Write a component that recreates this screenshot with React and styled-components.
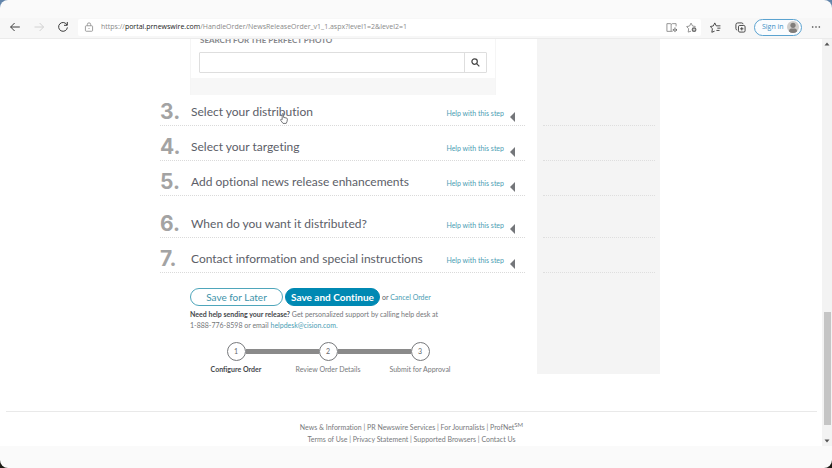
import React from "react";
import styled, { createGlobalStyle, css } from "styled-components";

const GlobalStyle = createGlobalStyle`
  *, *::before, *::after { box-sizing: border-box; }
  body {
    margin: 0;
    background: linear-gradient(#6285ab 0, #6285ab 50%, #1d1c16 50%);
    font-family: Lato, "Open Sans", sans-serif;
    font-variant-ligatures: none;
    color: #5e6065;
  }
  button, input { font-family: inherit; color: inherit; margin: 0; padding: 0; }
  a { text-decoration: none; color: inherit; }
`;

const Window = styled.div`
  display: flex;
  flex-direction: column;
  height: 100vh;
  overflow: hidden;
  border-radius: 8px;
  background: #fafafa;
`;

const TabStrip = styled.div`
  height: 18px;
  flex: none;
`;

const Toolbar = styled.header`
  display: flex;
  align-items: center;
  height: 21px;
  flex: none;
  padding: 0 2px 2px 7px;
  background: #f7f7f7;
  border-bottom: 1px solid #ebebeb;
`;

const ToolButton = styled.button`
  display: flex;
  align-items: center;
  justify-content: center;
  width: ${(p) => p.$width || 24}px;
  height: 16px;
  flex: none;
  border: 0;
  background: none;
  color: ${(p) => p.$color || "#3c3c3c"};
`;

const AddressBar = styled.div`
  display: flex;
  align-items: center;
  flex: 1;
  min-width: 0;
  height: 17px;
  margin-left: 7px;
  padding-left: 3px;
  border-radius: 2px;
  background: #fff;
`;

const Address = styled.div`
  flex: 1;
  min-width: 0;
  overflow: hidden;
  white-space: nowrap;
  padding-left: 4px;
  font: 7px/16px "Open Sans", sans-serif;
  color: #8a8a8a;
  b { font-weight: 400; color: #222; }
`;

const SignIn = styled.button`
  display: flex;
  align-items: center;
  justify-content: space-between;
  width: 48px;
  height: 17px;
  flex: none;
  margin-left: 3px;
  padding: 0 2px 0 7px;
  border: 1px solid #5ba3d0;
  border-radius: 9px;
  background: #fafcfe;
  font: 7px/14px "Open Sans", sans-serif;
  color: #3b8fc4;
`;

const Viewport = styled.div`
  display: flex;
  flex: 1;
  min-height: 0;
  background: #fff;
`;

const Page = styled.div`
  flex: 1;
  min-width: 0;
  padding-right: 2px;
  overflow: hidden;
`;

const Columns = styled.div`
  display: flex;
  gap: 12px;
  width: 500px;
  max-width: 100%;
  margin: 0 auto;
`;

const Main = styled.main`
  flex: 1;
  min-width: 0;
`;

const Sidebar = styled.aside`
  width: 123px;
  padding: 0 5px 0 6px;
  background: #f4f4f4;
`;

const SideSection = styled.div`
  height: ${(p) => p.$height}px;
  border-bottom: 1px dotted #dedede;
`;

const PhotoSearch = styled.form`
  height: 56px;
  margin: 0 29px 0 30px;
  border: solid #f5f5f5;
  border-width: 0 1px;
  overflow: hidden;
`;

const PhotoTitle = styled.label`
  display: block;
  height: 10px;
  margin: -5px 0 0 9px;
  font: 700 8px/12px Lato, sans-serif;
  color: #85868a;
`;

const SearchBox = styled.div`
  display: flex;
  height: 21px;
  margin: 8px 8px 5px 8px;
  border: 1px solid #dedede;
  border-radius: 1px;
`;

const SearchInput = styled.input`
  flex: 1;
  min-width: 0;
  border: 0;
  border-right: 1px solid #dedede;
  padding: 0 6px;
  background: #fff;
  font-size: 9px;
  outline: 0;
`;

const SearchButton = styled.button`
  display: flex;
  align-items: center;
  justify-content: center;
  width: 21px;
  border: 0;
  background: #fff;
  color: #444;
`;

const SearchFoot = styled.div`
  height: 17px;
  background: #f7f7f7;
`;

const Step = styled.section`
  position: relative;
  display: flex;
  align-items: flex-end;
  height: ${(p) => p.$height}px;
  border-bottom: 1px dotted #dadada;
`;

const StepNumber = styled.span`
  width: 31px;
  font: 700 21px/26px Inter, sans-serif;
  color: #a3a3a3;
`;

const StepTitle = styled.h2`
  flex: 1;
  margin: 0 0 5px;
  font: 400 12px/16px Lato, sans-serif;
  font-variant-ligatures: none;
  color: #5c5e68;
  white-space: nowrap;
`;

const HelpLink = styled.a`
  margin-bottom: 7px;
  font-size: 7px;
  line-height: 10px;
  color: #4b9db3;
`;

const Collapse = styled.button`
  display: flex;
  width: 5px;
  height: 10px;
  margin: 0 10px 3px 6px;
  border: 0;
  background: none;
`;

const Cursor = styled.svg`
  position: absolute;
  left: 120px;
  top: 18px;
`;

const Actions = styled.div`
  display: flex;
  align-items: center;
  gap: 2px;
  margin: 15px 0 0 30px;
  font-size: 7px;
  white-space: nowrap;
`;

const Pill = styled.button`
  height: 18px;
  width: ${(p) => (p.$primary ? 95 : 93)}px;
  border: 1px solid #4fa6bb;
  border-radius: 9px;
  background: #fff;
  color: #3d93aa;
  font: 400 10px/14px Lato, sans-serif;
  ${(p) =>
    p.$primary &&
    css`
      border-color: #0089b3;
      background: #0089b3;
      color: #fff;
      font-weight: 700;
      font-variant-ligatures: none;
    `}
`;

const TextLink = styled.a`
  color: #4b9db3;
`;

const Support = styled.p`
  margin: 3px 0 0 30px;
  font-size: 7px;
  line-height: 11px;
  color: #747679;
  b { color: #45474b; }
`;

const Progress = styled.ol`
  display: flex;
  width: 276px;
  margin: 11px 0 0 30px;
  padding: 0;
  list-style: none;
`;

const ProgressItem = styled.li`
  flex: 1;
  display: flex;
  flex-direction: column;
  align-items: center;
  font-size: 7px;
  line-height: 10px;
  white-space: nowrap;
  color: #77797c;
  font-weight: ${(p) => (p.$current ? 700 : 400)};
  ${(p) => p.$current && "color: #45474b;"}
`;

const Track = styled.div`
  display: flex;
  align-items: center;
  align-self: stretch;
  margin-bottom: 3px;
`;

const Line = styled.span`
  flex: 1;
  height: 5px;
  background: ${(p) => (p.$hidden ? "transparent" : "#8a8a8a")};
`;

const Circle = styled.span`
  width: 19px;
  height: 19px;
  border: 1px solid #77797c;
  border-radius: 50%;
  text-align: center;
  font: 400 7px/16px Lato, sans-serif;
  color: #66686b;
`;

const Footer = styled.footer`
  margin: 37px 3px 0 6px;
  padding-top: 9px;
  border-top: 1px solid #e9e9e9;
  text-align: center;
  font-size: 7px;
  line-height: 12px;
  color: #77797c;
  sup { font-size: 6px; line-height: 0; }
`;

const Scrollbar = styled.div`
  display: flex;
  flex-direction: column;
  align-items: center;
  width: 10px;
  padding: 3px 1px;
  background: #f3f3f3;
  color: #555;
`;

const Thumb = styled.div`
  width: 7px;
  height: 113px;
  margin: auto 0 14px;
  background: #c5c5c5;
`;

const StatusArea = styled.div`
  height: 22px;
  flex: none;
`;

const Icon = ({ size = 12, children, ...rest }) => (
  <svg width={size} height={size} viewBox="0 0 12 12" fill="none" stroke="currentColor" strokeWidth="1" aria-hidden="true" {...rest}>
    {children}
  </svg>
);

const steps = [
  { n: 3, title: "Select your distribution", height: 31 },
  { n: 4, title: "Select your targeting", height: 35 },
  { n: 5, title: "Add optional news release enhancements", height: 35 },
  { n: 6, title: "When do you want it distributed?", height: 42 },
  { n: 7, title: "Contact information and special instructions", height: 35 },
];

const stages = ["Configure Order", "Review Order Details", "Submit for Approval"];

const footerLinks = [
  ["News & Information", "PR Newswire Services", "For Journalists", "ProfNet"],
  ["Terms of Use", "Privacy Statement", "Supported Browsers", "Contact Us"],
];

export default function App() {
  return (
    <>
      <GlobalStyle />
      <Window>
        <TabStrip />
        <Toolbar>
          <ToolButton $width={16} aria-label="Back">
            <Icon><path d="M10.8 6H1.6M5.6 2 1.6 6l4 4" /></Icon>
          </ToolButton>
          <ToolButton $width={32} $color="#d2d2d2" aria-label="Forward">
            <Icon><path d="M1.5 6h9M6.6 2l4 4-4 4" /></Icon>
          </ToolButton>
          <ToolButton $width={16} aria-label="Refresh">
            <Icon><path d="M10 4A4.4 4.4 0 1 0 10.4 6.4M10.3 1v3.3H7" /></Icon>
          </ToolButton>
          <AddressBar>
            <ToolButton $width={16} $color="#8c8c8c" aria-label="Site information">
              <Icon size={10}><rect x="1.7" y="4.5" width="8.6" height="6.6" rx="1" /><path d="M4 4.4V3a2 2 0 0 1 4 0v1.4M6 7.2v1.2" /></Icon>
            </ToolButton>
            <Address>
              https://<b>portal.prnewswire.com</b>/HandleOrder/NewsReleaseOrder_v1_1.aspx?level1=2&amp;level2=1
            </Address>
            <ToolButton $width={20} $color="#8c8c8c" aria-label="Immersive reader">
              <Icon size={11}><path d="M5.6 2.2V10.2H1V1.8h4.2l.8.6.8-.6H11v3M5.6 10.2h1.6" /><path d="M8 7.6v2M9.8 6v5M11.4 7.6v2" stroke="#555" /></Icon>
            </ToolButton>
            <ToolButton $width={20} $color="#8c8c8c" aria-label="Add to favorites">
              <Icon size={11}><path d="M5.5 10 2.4 11l.5-3.6L.7 5l3.2-.6L5.5 1.2l1.7 3.2 3.2.5" /><circle cx="8.8" cy="8.4" r="2.6" fill="#666" stroke="none" /><path d="M8.8 7v2.8M7.4 8.4h2.8" stroke="#fff" strokeWidth=".7" /></Icon>
            </ToolButton>
          </AddressBar>
          <ToolButton $width={28} aria-label="Favorites">
            <Icon size={11}><path d="M5 10 2 11.2l.6-3.8L.4 4.9l3.2-.6L5.2 1l1.6 3.2h4.6M8 6.7h3.4M7 9.2h3.4" /></Icon>
          </ToolButton>
          <ToolButton $width={22} aria-label="Collections">
            <Icon size={11}><rect x="3.8" y="3.8" width="7.2" height="7.2" rx="1.4" /><path d="M2.4 8.8A1.6 1.6 0 0 1 1 7.2V3a2 2 0 0 1 2-2h4.2a1.6 1.6 0 0 1 1.6 1.4M7.4 5.6v3.6M5.6 7.4h3.6" /></Icon>
          </ToolButton>
          <SignIn>
            Sign in
            <svg width="12" height="12" viewBox="0 0 12 12" aria-hidden="true">
              <circle cx="6" cy="6" r="6" fill="#d0cecb" />
              <circle cx="6" cy="4.3" r="2.6" fill="#807d7a" />
              <path d="M2 10.4C2 8 3 7.5 6 7.5s4 .5 4 2.9a6 6 0 0 1-8 0Z" fill="#807d7a" />
            </svg>
          </SignIn>
          <ToolButton $width={28} aria-label="Settings and more">
            <Icon size={10}><g fill="currentColor" stroke="none"><circle cx="2" cy="6" r="1" /><circle cx="6" cy="6" r="1" /><circle cx="10" cy="6" r="1" /></g></Icon>
          </ToolButton>
        </Toolbar>
        <Viewport>
          <Page>
            <Columns>
              <Main>
                <PhotoSearch>
                  <PhotoTitle htmlFor="photo">SEARCH FOR THE PERFECT PHOTO</PhotoTitle>
                  <SearchBox>
                    <SearchInput id="photo" type="text" />
                    <SearchButton type="button" aria-label="Search">
                      <Icon size={9} strokeWidth="1.6"><circle cx="4.8" cy="4.8" r="3.6" /><path d="m7.5 7.5 3.6 3.6" /></Icon>
                    </SearchButton>
                  </SearchBox>
                  <SearchFoot />
                </PhotoSearch>
                {steps.map((s) => (
                  <Step key={s.n} $height={s.height}>
                    <StepNumber>{s.n}.</StepNumber>
                    <StepTitle>{s.title}</StepTitle>
                    <HelpLink href="#help">Help with this step</HelpLink>
                    <Collapse aria-label={"Expand step " + s.n}>
                      <svg width="5" height="10" viewBox="0 0 5 10"><path d="M5 0v10L0 5Z" fill="#74767a" /></svg>
                    </Collapse>
                    {s.n === 3 && (
                      <Cursor width="8" height="11" viewBox="0 0 8 11" fill="#fff" stroke="#55575b" strokeWidth=".8" aria-hidden="true">
                        <path d="M2.2 6.6V1.2a.7.7 0 0 1 1.4 0v3.2l2.8.6c.7.2 1 .5 1 1.2L7 8.6 6.2 10.4H3L.6 7.2c-.3-.7.5-1.1 1-.8Z" />
                      </Cursor>
                    )}
                  </Step>
                ))}
                <Actions>
                  <Pill type="button">Save for Later</Pill>
                  <Pill type="button" $primary>Save and Continue</Pill>
                  <span>or <TextLink href="#cancel">Cancel Order</TextLink></span>
                </Actions>
                <Support>
                  <b>Need help sending your release?</b> Get personalized support by calling help desk at
                  <br />
                  1-888-776-8598 or email <TextLink href="mailto:helpdesk@cision.com">helpdesk@cision.com.</TextLink>
                </Support>
                <Progress>
                  {stages.map((label, i) => (
                    <ProgressItem key={label} $current={i === 0}>
                      <Track>
                        <Line $hidden={i === 0} />
                        <Circle>{i + 1}</Circle>
                        <Line $hidden={i === 2} />
                      </Track>
                      {label}
                    </ProgressItem>
                  ))}
                </Progress>
              </Main>
              <Sidebar>
                <SideSection $height={87} />
                {steps.slice(1).map((s) => (
                  <SideSection key={s.n} $height={s.height} />
                ))}
              </Sidebar>
            </Columns>
            <Footer>
              {footerLinks.map((line, i) => (
                <div key={i}>
                  {line.map((label, j) => (
                    <React.Fragment key={label}>
                      {j > 0 && " | "}
                      <a href="#footer">{label}{label === "ProfNet" && <sup>SM</sup>}</a>
                    </React.Fragment>
                  ))}
                </div>
              ))}
            </Footer>
          </Page>
          <Scrollbar>
            <svg width="6" height="4" viewBox="0 0 6 4"><path d="M.5 3.5h5L3 .5Z" fill="currentColor" /></svg>
            <Thumb />
            <svg width="6" height="4" viewBox="0 0 6 4"><path d="M.5.5h5L3 3.5Z" fill="currentColor" /></svg>
          </Scrollbar>
        </Viewport>
        <StatusArea />
      </Window>
    </>
  );
}
